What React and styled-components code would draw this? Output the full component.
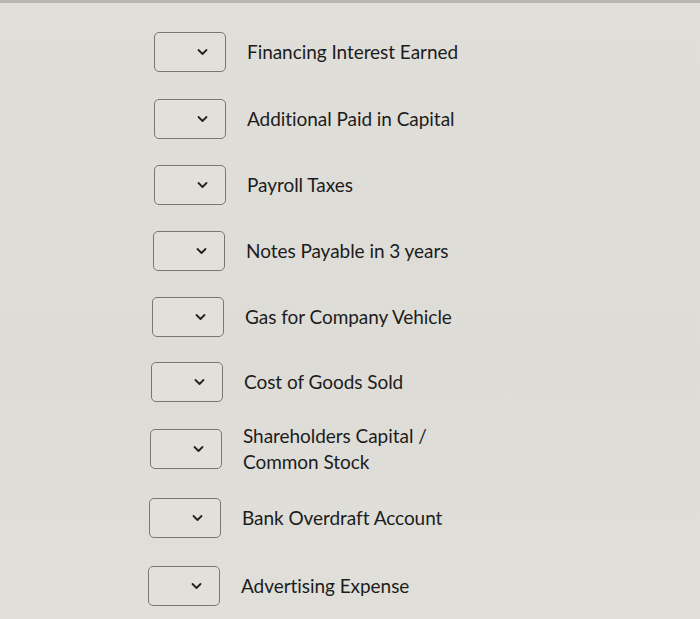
import styled, { createGlobalStyle } from "styled-components";

const GlobalStyle = createGlobalStyle`
  html, body {
    margin: 0;
    padding: 0;
    background: #dfddd8;
  }
  body {
    font-family: Lato, "Open Sans", sans-serif;
  }
`;

const Page = styled.div`
  width: 700px;
  height: 619px;
  overflow: hidden;
  background: linear-gradient(180deg, #e0ded9 0%, #dedcd7 60%, #e1dfda 100%);
  border-top: 3px solid #b9b7b2;
  box-sizing: border-box;
`;

const List = styled.div`
  display: flex;
  flex-direction: column;
  padding-top: 16px;
`;

const Row = styled.div`
  display: flex;
  align-items: center;
  height: ${(p) => p.$h}px;
  padding-left: ${(p) => p.$x}px;
`;

const Select = styled.div`
  box-sizing: border-box;
  width: 72px;
  height: 40px;
  flex-shrink: 0;
  border: 1px solid #777;
  border-radius: 5px;
  background: #e2e0db;
  display: flex;
  align-items: center;
  justify-content: flex-end;
  padding-right: 17px;
`;

const Label = styled.div`
  margin-left: 21px;
  font-size: 19px;
  line-height: 26px;
  color: #1c1c1c;
  letter-spacing: -0.05px;
`;

const Chevron = () => (
  <svg width="11" height="8" viewBox="0 0 11 8">
    <path d="M1.5 2 L5.5 6 L9.5 2" fill="none" stroke="#222" strokeWidth="1.8" strokeLinecap="round" strokeLinejoin="round" />
  </svg>
);

const rows = [
  { text: "Financing Interest Earned", x: 154, h: 66 },
  { text: "Additional Paid in Capital", x: 154, h: 67 },
  { text: "Payroll Taxes", x: 154, h: 66 },
  { text: "Notes Payable in 3 years", x: 153, h: 66 },
  { text: "Gas for Company Vehicle", x: 152, h: 66 },
  { text: "Cost of Goods Sold", x: 151, h: 64 },
  { text: ["Shareholders Capital /", "Common Stock"], x: 150, h: 70 },
  { text: "Bank Overdraft Account", x: 149, h: 68 },
  { text: "Advertising Expense", x: 148, h: 68 },
];

export default function App() {
  return (
    <Page>
      <GlobalStyle />
      <List>
        {rows.map((r, i) => (
          <Row key={i} $x={r.x} $h={r.h}>
            <Select>
              <Chevron />
            </Select>
            <Label>
              {Array.isArray(r.text)
                ? r.text.map((t) => <div key={t}>{t}</div>)
                : r.text}
            </Label>
          </Row>
        ))}
      </List>
    </Page>
  );
}
